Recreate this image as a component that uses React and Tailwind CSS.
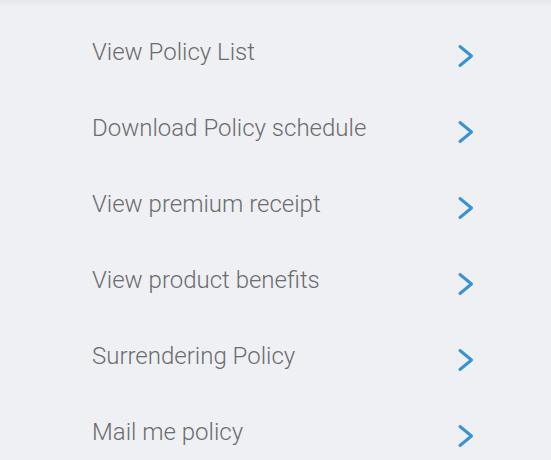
const items = [
  'View Policy List',
  'Download Policy schedule',
  'View premium receipt',
  'View product benefits',
  'Surrendering Policy',
  'Mail me policy',
];

const Chevron = () => (
  <svg width="18" height="26" viewBox="0 0 18 26" fill="none">
    <path d="M3 3.5l11.5 9.5L3 22.5" stroke="#3993d2" strokeWidth="3" strokeLinecap="round" strokeLinejoin="round" />
  </svg>
);

const App = () => {
  return (
    <div className="relative h-[460px] w-[551px] overflow-hidden bg-[#eff0f4] font-['Roboto',sans-serif]">
      <div className="absolute left-0 right-0 top-0 h-[6px] bg-gradient-to-b from-[#e6e7eb] to-[#eff0f4]" />
      <ul className="pt-[14px]">
        {items.map((item) => (
          <li key={item} className="flex h-[76px] items-center justify-between pl-[92px] pr-[76px]">
            <span className="text-[24px] font-light text-[#6b6c6e]">{item}</span>
            <span className="mt-[7px]"><Chevron /></span>
          </li>
        ))}
      </ul>
    </div>
  );
};

export default App;
